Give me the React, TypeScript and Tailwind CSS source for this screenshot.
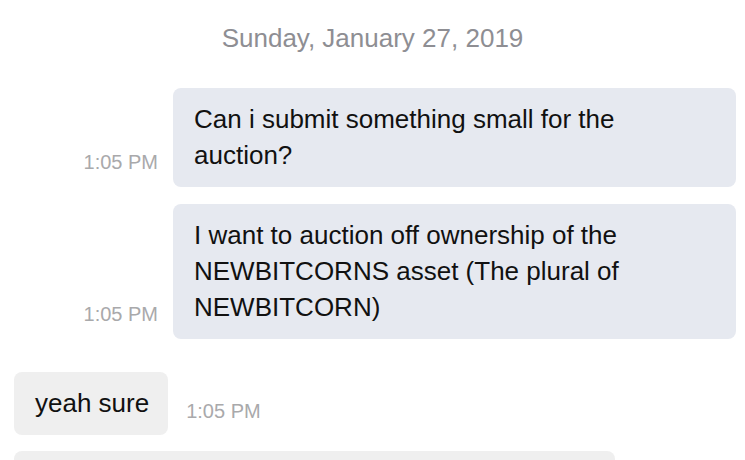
import React from "react";

const font = { fontFamily: '"Liberation Sans", Arial, sans-serif' };

function Time() {
  return (
    <span className="text-[20px] leading-[24px] text-[#a9a9ab] whitespace-nowrap">1:05 PM</span>
  );
}

export default function App() {
  return (
    <div className="w-[745px] h-[460px] overflow-hidden bg-white" style={font}>
      <div className="pt-[22px] text-center text-[26px] leading-[32px] text-[#8e8e93]">
        Sunday, January 27, 2019
      </div>

      <div className="mt-[34px] flex justify-end items-end gap-[15px] pr-[9px]">
        <div className="mb-[11px]">
          <Time />
        </div>
        <div className="w-[563px] rounded-[8px] bg-[#e6e9f0] pl-[21px] pt-[13px] pb-[14px] text-[26px] leading-[36px] text-[#111] whitespace-nowrap">
          Can i submit something small for the
          <br />
          auction?
        </div>
      </div>

      <div className="mt-[17px] flex justify-end items-end gap-[15px] pr-[9px]">
        <div className="mb-[11px]">
          <Time />
        </div>
        <div className="w-[563px] rounded-[8px] bg-[#e6e9f0] pl-[21px] pt-[13px] pb-[14px] text-[26px] leading-[36px] text-[#111] whitespace-nowrap">
          I want to auction off ownership of the
          <br />
          NEWBITCORNS asset (The plural of
          <br />
          NEWBITCORN)
        </div>
      </div>

      <div className="mt-[33px] flex items-end gap-[18px] pl-[14px]">
        <div className="rounded-[8px] bg-[#efefef] pl-[21px] pr-[19px] pt-[13px] pb-[14px] text-[26px] leading-[36px] text-[#111] whitespace-nowrap">
          yeah sure
        </div>
        <div className="mb-[10px]">
          <Time />
        </div>
      </div>

      <div className="mt-[16px] ml-[14px] w-[601px] h-[60px] rounded-[8px] bg-[#efefef]" />
    </div>
  );
}
